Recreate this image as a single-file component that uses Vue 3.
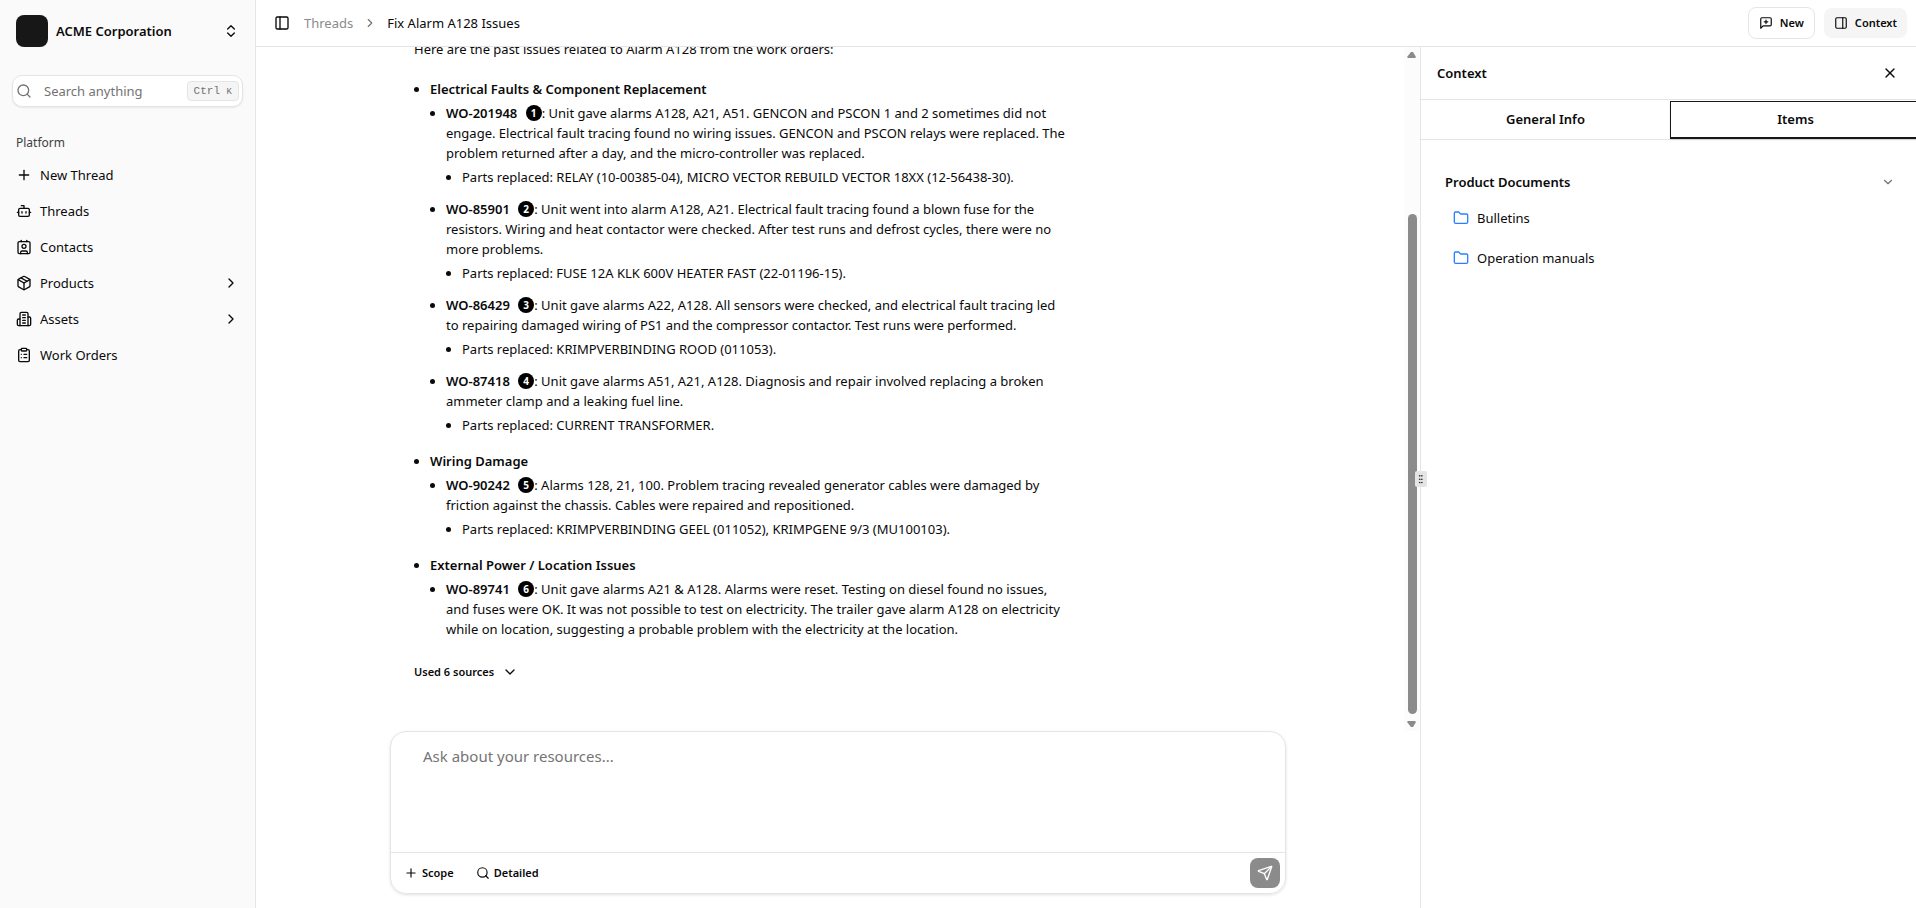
<template>
  <div class="app">
    <aside class="sidebar">
      <button class="org" type="button">
        <span class="org-logo"></span>
        <span class="org-name">ACME Corporation</span>
        <Icon name="chevronsUpDown" />
      </button>

      <label class="search">
        <Icon name="search" />
        <input type="text" placeholder="Search anything" aria-label="Search anything" />
        <kbd>Ctrl <small>K</small></kbd>
      </label>

      <nav class="nav">
        <p class="nav-title">Platform</p>
        <a v-for="item in navItems" :key="item.label" class="nav-item" href="#">
          <Icon :name="item.icon" />
          <span class="nav-label">{{ item.label }}</span>
          <Icon v-if="item.expandable" name="chevronRight" />
        </a>
      </nav>
    </aside>

    <div class="workspace">
      <header class="topbar">
        <button class="icon-btn" type="button" aria-label="Toggle sidebar"><Icon name="panelLeft" /></button>
        <nav class="crumbs">
          <a href="#">Threads</a>
          <Icon name="chevronRight" :size="14" />
          <span>Fix Alarm A128 Issues</span>
        </nav>
        <div class="topbar-actions">
          <button class="btn btn-outline" type="button"><Icon name="messagePlus" :size="14" />New</button>
          <button class="btn btn-muted" type="button"><Icon name="panelRight" :size="14" />Context</button>
        </div>
      </header>

      <div class="panes">
        <main class="thread">
          <div class="thread-scroll">
            <div class="messages">
              <article class="answer">
                <p class="intro">Here are the past issues related to Alarm A128 from the work orders:</p>
                <ul class="groups">
                  <li v-for="group in groups" :key="group.title">
                    <strong>{{ group.title }}</strong>
                    <ul class="orders">
                      <li v-for="order in group.orders" :key="order.id">
                        <strong>{{ order.id }}</strong>
                        {{ ' ' }}<a class="cite" href="#">{{ order.cite }}</a>: {{ order.text }}
                        <ul v-if="order.parts" class="parts">
                          <li>Parts replaced: {{ order.parts }}</li>
                        </ul>
                      </li>
                    </ul>
                  </li>
                </ul>
                <button class="sources" type="button">Used 6 sources <Icon name="chevronDown" /></button>
              </article>
            </div>
            <div class="scrollbar" aria-hidden="true">
              <svg width="10" height="8" viewBox="0 0 10 8"><path d="M4 1h2l3 5-1 1H1L0 6z" /></svg>
              <div class="track"><div class="thumb"></div></div>
              <svg width="10" height="8" viewBox="0 0 10 8"><path d="M4 7h2l3-5-1-1H1L0 2z" /></svg>
            </div>
          </div>

          <form class="composer" @submit.prevent>
            <textarea v-model="draft" placeholder="Ask about your resources..." aria-label="Ask about your resources"></textarea>
            <div class="composer-bar">
              <button class="tool" type="button"><Icon name="plus" :size="14" />Scope</button>
              <button class="tool" type="button"><Icon name="search" :size="14" />Detailed</button>
              <button class="send" type="submit" aria-label="Send"><Icon name="send" /></button>
            </div>
          </form>
        </main>

        <aside class="context">
          <span class="grip"><Icon name="grip" :size="10" /></span>
          <div class="context-head">
            <h2>Context</h2>
            <button class="icon-btn" type="button" aria-label="Close"><Icon name="close" /></button>
          </div>
          <div class="tabs" role="tablist">
            <button type="button" role="tab">General Info</button>
            <button class="active" type="button" role="tab" aria-selected="true">Items</button>
          </div>
          <section class="docs">
            <button class="docs-head" type="button">Product Documents <Icon name="chevronDown" :size="14" /></button>
            <a v-for="folder in folders" :key="folder" class="folder" href="#">
              <Icon name="folder" />{{ folder }}
            </a>
          </section>
        </aside>
      </div>
    </div>
  </div>
</template>

<script setup>
import { h, ref } from 'vue'

const draft = ref('')

// 24x24 stroke icons
const paths = {
  chevronsUpDown: ['m7 15 5 5 5-5', 'm7 9 5-5 5 5'],
  chevronRight: ['m9 18 6-6-6-6'],
  chevronDown: ['m6 9 6 6 6-6'],
  search: ['M3 11a8 8 0 1 0 16 0a8 8 0 1 0-16 0', 'm21 21-4.3-4.3'],
  plus: ['M5 12h14', 'M12 5v14'],
  bot: ['M12 8V4H8', 'M6 8h12a2 2 0 0 1 2 2v8a2 2 0 0 1-2 2H6a2 2 0 0 1-2-2v-8a2 2 0 0 1 2-2z', 'M2 14h2', 'M20 14h2', 'M15 13v2', 'M9 13v2'],
  contact: ['M16 2v2', 'M8 2v2', 'M7 22v-2a2 2 0 0 1 2-2h6a2 2 0 0 1 2 2v2', 'M9 11a3 3 0 1 0 6 0a3 3 0 1 0-6 0', 'M5 4h14a2 2 0 0 1 2 2v14a2 2 0 0 1-2 2H5a2 2 0 0 1-2-2V6a2 2 0 0 1 2-2z'],
  package: ['M11 21.73a2 2 0 0 0 2 0l7-4A2 2 0 0 0 21 16V8a2 2 0 0 0-1-1.73l-7-4a2 2 0 0 0-2 0l-7 4A2 2 0 0 0 3 8v8a2 2 0 0 0 1 1.73z', 'M12 22V12', 'M3.29 7 12 12l8.71-5', 'm7.5 4.27 9 5.15'],
  building: ['M6 22V4a2 2 0 0 1 2-2h8a2 2 0 0 1 2 2v18Z', 'M6 12H4a2 2 0 0 0-2 2v6a2 2 0 0 0 2 2h2', 'M18 9h2a2 2 0 0 1 2 2v9a2 2 0 0 1-2 2h-2', 'M10 6h4', 'M10 10h4', 'M10 14h4', 'M10 18h4'],
  clipboard: ['M9 2h6a1 1 0 0 1 1 1v2a1 1 0 0 1-1 1H9a1 1 0 0 1-1-1V3a1 1 0 0 1 1-1z', 'M16 4h2a2 2 0 0 1 2 2v14a2 2 0 0 1-2 2H6a2 2 0 0 1-2-2V6a2 2 0 0 1 2-2h2', 'M12 11h4', 'M12 16h4', 'M8 11h.01', 'M8 16h.01'],
  panelLeft: ['M5 3h14a2 2 0 0 1 2 2v14a2 2 0 0 1-2 2H5a2 2 0 0 1-2-2V5a2 2 0 0 1 2-2z', 'M9 3v18'],
  panelRight: ['M5 3h14a2 2 0 0 1 2 2v14a2 2 0 0 1-2 2H5a2 2 0 0 1-2-2V5a2 2 0 0 1 2-2z', 'M15 3v18'],
  messagePlus: ['M21 15a2 2 0 0 1-2 2H7l-4 4V5a2 2 0 0 1 2-2h14a2 2 0 0 1 2 2z', 'M12 7v6', 'M9 10h6'],
  close: ['M18 6 6 18', 'm6 6 12 12'],
  folder: ['M20 20a2 2 0 0 0 2-2V8a2 2 0 0 0-2-2h-7.9a2 2 0 0 1-1.69-.9L9.6 3.9A2 2 0 0 0 7.93 3H4a2 2 0 0 0-2 2v13a2 2 0 0 0 2 2Z'],
  grip: ['M9 4h1v1H9z', 'M9 12h1v1H9z', 'M9 20h1v1H9z', 'M14 4h1v1h-1z', 'M14 12h1v1h-1z', 'M14 20h1v1h-1z'],
  send: ['M14.536 21.686a.5.5 0 0 0 .937-.024l6.5-19a.496.496 0 0 0-.635-.635l-19 6.5a.5.5 0 0 0-.024.937l7.93 3.18a2 2 0 0 1 1.112 1.11z', 'm21.854 2.147-10.94 10.939'],
}

const Icon = ({ name, size = 16 }) =>
  h('svg', {
    class: 'icon',
    width: size,
    height: size,
    viewBox: '0 0 24 24',
    fill: 'none',
    stroke: 'currentColor',
    'stroke-width': 2,
    'stroke-linecap': 'round',
    'stroke-linejoin': 'round',
    'aria-hidden': 'true',
  }, paths[name].map((d) => h('path', { d })))
Icon.props = ['name', 'size']

const navItems = [
  { label: 'New Thread', icon: 'plus' },
  { label: 'Threads', icon: 'bot' },
  { label: 'Contacts', icon: 'contact' },
  { label: 'Products', icon: 'package', expandable: true },
  { label: 'Assets', icon: 'building', expandable: true },
  { label: 'Work Orders', icon: 'clipboard' },
]

const folders = ['Bulletins', 'Operation manuals']

const groups = [
  {
    title: 'Electrical Faults & Component Replacement',
    orders: [
      {
        id: 'WO-201948',
        cite: 1,
        text: 'Unit gave alarms A128, A21, A51. GENCON and PSCON 1 and 2 sometimes did not engage. Electrical fault tracing found no wiring issues. GENCON and PSCON relays were replaced. The problem returned after a day, and the micro-controller was replaced.',
        parts: 'RELAY (10-00385-04), MICRO VECTOR REBUILD VECTOR 18XX (12-56438-30).',
      },
      {
        id: 'WO-85901',
        cite: 2,
        text: 'Unit went into alarm A128, A21. Electrical fault tracing found a blown fuse for the resistors. Wiring and heat contactor were checked. After test runs and defrost cycles, there were no more problems.',
        parts: 'FUSE 12A KLK 600V HEATER FAST (22-01196-15).',
      },
      {
        id: 'WO-86429',
        cite: 3,
        text: 'Unit gave alarms A22, A128. All sensors were checked, and electrical fault tracing led to repairing damaged wiring of PS1 and the compressor contactor. Test runs were performed.',
        parts: 'KRIMPVERBINDING ROOD (011053).',
      },
      {
        id: 'WO-87418',
        cite: 4,
        text: 'Unit gave alarms A51, A21, A128. Diagnosis and repair involved replacing a broken ammeter clamp and a leaking fuel line.',
        parts: 'CURRENT TRANSFORMER.',
      },
    ],
  },
  {
    title: 'Wiring Damage',
    orders: [
      {
        id: 'WO-90242',
        cite: 5,
        text: 'Alarms 128, 21, 100. Problem tracing revealed generator cables were damaged by friction against the chassis. Cables were repaired and repositioned.',
        parts: 'KRIMPVERBINDING GEEL (011052), KRIMPGENE 9/3 (MU100103).',
      },
    ],
  },
  {
    title: 'External Power / Location Issues',
    orders: [
      {
        id: 'WO-89741',
        cite: 6,
        text: 'Unit gave alarms A21 & A128. Alarms were reset. Testing on diesel found no issues, and fuses were OK. It was not possible to test on electricity. The trailer gave alarm A128 on electricity while on location, suggesting a probable problem with the electricity at the location.',
      },
    ],
  },
]
</script>

<style>
body { margin: 0; }
</style>

<style scoped>
*, *::before, *::after { box-sizing: border-box; }

.app {
  --c-border: #e5e5e5;
  --c-txt: #0a0a0a;
  --c-muted: #737373;
  display: flex;
  height: 100vh;
  overflow: hidden;
  font-family: 'Segoe UI', 'Noto Sans', sans-serif;
  font-size: 13px;
  line-height: 20px;
  color: var(--c-txt);
  background: #fff;
}

button, input, textarea { font: inherit; color: inherit; }
button { padding: 0; border: 0; background: none; cursor: pointer; }
a { color: inherit; text-decoration: none; }
p, h2, ul { margin: 0; }
strong { font-weight: 600; }
.icon { flex: none; }

/* ── Sidebar ── */
.sidebar {
  display: flex;
  flex-direction: column;
  flex: none;
  width: 256px;
  padding: 15px 12px;
  background: #fafafa;
  border-right: 1px solid var(--c-border);
}
.org {
  display: flex;
  align-items: center;
  gap: 8px;
  padding: 0 4px;
  text-align: left;
}
.org-logo {
  width: 32px;
  height: 32px;
  border-radius: 8px;
  background: #171717;
}
.org-name { flex: 1; font-weight: 600; }

.search {
  display: flex;
  align-items: center;
  gap: 12px;
  height: 32px;
  margin-top: 28px;
  padding: 0 3px;
  border: 1px solid var(--c-border);
  border-radius: 10px;
  background: #fff;
  box-shadow: 0 1px 2px rgba(0, 0, 0, .08);
  color: var(--c-muted);
}
.search input {
  flex: 1;
  min-width: 0;
  padding: 0;
  border: 0;
  outline: 0;
  background: none;
}
.search input::placeholder { color: var(--c-muted); opacity: 1; }
.search kbd {
  height: 20px;
  padding: 0 6px;
  border: 1px solid var(--c-border);
  border-radius: 4px;
  background: #f5f5f5;
  font: 500 11px/18px 'Liberation Mono', monospace;
  white-space: nowrap;
}
.search small { font-size: 9px; }

.nav {
  display: flex;
  flex-direction: column;
  gap: 4px;
  margin-top: 24px;
  padding: 0 4px;
}
.nav-title { font-size: 12px; line-height: 24px; color: #404040; }
.nav-item {
  display: flex;
  align-items: center;
  gap: 8px;
  height: 32px;
}
.nav-label { flex: 1; }

/* ── Top bar ── */
.workspace {
  display: flex;
  flex-direction: column;
  flex: 1;
  min-width: 0;
}
.topbar {
  display: flex;
  align-items: center;
  flex: none;
  gap: 14px;
  height: 47px;
  padding: 0 9px 0 18px;
  border-bottom: 1px solid var(--c-border);
}
.icon-btn { display: flex; }
.crumbs {
  display: flex;
  align-items: center;
  gap: 10px;
  flex: 1;
}
.crumbs a { color: #8a8a8a; }
.crumbs .icon { color: var(--c-muted); }
.topbar-actions { display: flex; align-items: center; gap: 9px; }
.btn {
  display: flex;
  align-items: center;
  gap: 7px;
  height: 30px;
  padding: 0 10px;
  border-radius: 8px;
  font-size: 11px;
  font-weight: 600;
}
.btn-outline { height: 32px; border: 1px solid var(--c-border); }
.btn-muted { background: #f5f5f5; }

/* ── Thread ── */
.panes { display: flex; flex: 1; min-height: 0; }
.thread {
  display: flex;
  flex-direction: column;
  flex: 1;
  min-width: 0;
}
.thread-scroll { display: flex; flex: 1; min-height: 0; }
.messages {
  display: flex;
  flex-direction: column;
  justify-content: flex-end;
  flex: 1;
  min-width: 0;
  padding: 0 0 49px 16px;
  overflow: hidden;
}
.answer {
  width: 100%;
  max-width: 896px;
  margin: 0 auto;
  padding: 0 218px 0 24px;
}
.intro { margin-bottom: 20px; }
.answer ul { padding-left: 16px; list-style: disc; }
.groups > li + li { margin-top: 16px; }
.orders { margin-top: 4px; }
.orders > li + li { margin-top: 12px; }
.parts { margin-top: 4px; }
.cite {
  display: inline-block;
  width: 16px;
  height: 16px;
  margin: 2px 0 0 5px;
  border-radius: 50%;
  background: #000;
  color: #fff;
  font-size: 10px;
  font-weight: 700;
  line-height: 16px;
  text-align: center;
  vertical-align: top;
}
.sources {
  display: flex;
  align-items: center;
  gap: 8px;
  margin-top: 23px;
  font-size: 11px;
  font-weight: 600;
}

.scrollbar {
  display: flex;
  flex-direction: column;
  align-items: center;
  flex: none;
  gap: 6px;
  width: 16px;
  padding: 4px 0 3px;
  background: #fcfcfc;
}
.scrollbar svg { flex: none; fill: #8b8b8b; }
.track {
  display: flex;
  flex-direction: column;
  justify-content: flex-end;
  flex: 1;
}
.thumb {
  width: 9px;
  height: 77%;
  border-radius: 5px;
  background: #8b8b8b;
}

.composer {
  display: flex;
  flex-direction: column;
  flex: none;
  width: calc(100% - 32px);
  max-width: 896px;
  margin: 0 auto 14px;
  border: 1px solid var(--c-border);
  border-radius: 16px;
  box-shadow: 0 1px 3px rgba(0, 0, 0, .12);
}
.composer textarea {
  display: block;
  height: 120px;
  padding: 12px 32px;
  border: 0;
  outline: 0;
  background: none;
  font-size: 15px;
  line-height: 24px;
  resize: none;
}
.composer textarea::placeholder { color: #757575; opacity: 1; }
.composer-bar {
  display: flex;
  align-items: center;
  gap: 22px;
  height: 41px;
  padding: 0 5px 0 13px;
  border-top: 1px solid var(--c-border);
}
.tool {
  display: flex;
  align-items: center;
  gap: 4px;
  font-size: 11px;
  font-weight: 600;
}
.send {
  display: flex;
  align-items: center;
  justify-content: center;
  width: 30px;
  height: 30px;
  margin-left: auto;
  border-radius: 8px;
  background: #8b8b8b;
  color: #fff;
}

/* ── Context panel ── */
.context {
  position: relative;
  flex: none;
  width: 496px;
  border-left: 1px solid var(--c-border);
}
.grip {
  position: absolute;
  top: 50%;
  left: -6px;
  display: flex;
  align-items: center;
  justify-content: center;
  width: 12px;
  height: 16px;
  margin-top: -7px;
  border-radius: 2px;
  background: var(--c-border);
}
.context-head {
  display: flex;
  align-items: center;
  justify-content: space-between;
  height: 53px;
  padding: 0 18px 0 16px;
  border-bottom: 1px solid var(--c-border);
}
.context-head h2 { font-size: inherit; font-weight: 600; }
.tabs {
  display: flex;
  height: 40px;
  margin-right: -5px;
  padding-top: 1px;
  border-bottom: 1px solid var(--c-border);
}
.tabs button { flex: 1; padding-bottom: 2px; font-weight: 600; }
.tabs .active {
  padding-bottom: 1px;
  border: 1px solid #171717;
  border-bottom-width: 2px;
  box-shadow: 0 1px 2px rgba(0, 0, 0, .1);
}
.docs {
  display: flex;
  flex-direction: column;
  padding: 32px 21px 0 24px;
}
.docs-head {
  display: flex;
  align-items: center;
  justify-content: space-between;
  margin-bottom: 6px;
  font-weight: 600;
}
.docs-head .icon { color: var(--c-muted); }
.folder {
  display: flex;
  align-items: center;
  gap: 8px;
  height: 40px;
  padding-left: 8px;
}
.folder .icon { color: #2b7fff; }
</style>
